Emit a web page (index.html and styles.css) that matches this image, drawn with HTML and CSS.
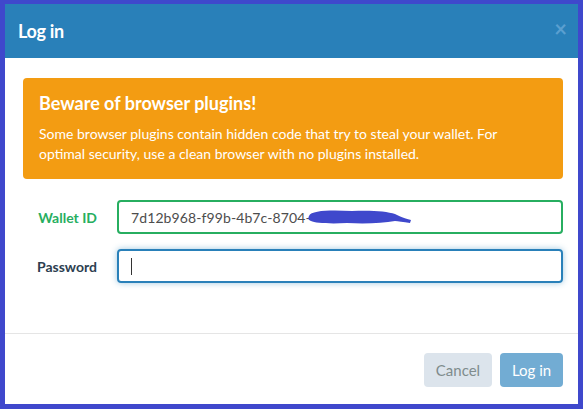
FILE: index.html
```html
<!DOCTYPE html>
<html>
<head>
<meta charset="utf-8">
<link rel="stylesheet" href="styles.css">
</head>
<body>
<div class="modal">
  <div class="modal-header">
    <h1 class="modal-title">Log in</h1>
    <span class="close">&times;</span>
  </div>
  <div class="modal-body">
    <div class="alert">
      <h2 class="alert-title">Beware of browser plugins!</h2>
      <p class="alert-text">Some browser plugins contain hidden code that try to steal your wallet. For optimal security, use a clean browser with no plugins installed.</p>
    </div>
    <div class="form">
      <div class="row">
        <label class="label label-ok">Wallet ID</label>
        <div class="field field-ok">
          <span class="value">7d12b968-f99b-4b7c-8704-</span>
          <svg class="scribble" width="106" height="16" viewBox="0 0 106 16">
            <path d="M2 7 C 4 1, 25 1, 45 2 C 62 1, 80 2, 88 5 C 92 7, 96 9, 104 11 L 103 14 C 96 13, 91 12, 88 12 C 76 14, 60 15, 40 14 C 22 15, 8 14, 4 12 C 1 11, 1 9, 2 7 Z" fill="#3f48cc"/>
          </svg>
        </div>
      </div>
      <div class="row">
        <label class="label">Password</label>
        <div class="field field-focus"><span class="caret"></span></div>
      </div>
    </div>
  </div>
  <div class="modal-footer">
    <button class="btn btn-cancel">Cancel</button>
    <button class="btn btn-primary">Log in</button>
  </div>
</div>
</body>
</html>
```
FILE: styles.css
```css
html, body {
  margin: 0;
  padding: 0;
}
body {
  background: #3f48cc;
  width: 583px;
  height: 409px;
  overflow: hidden;
  font-family: Lato, "Open Sans", sans-serif;
}
.modal {
  margin: 4px 5px 0 5px;
  height: 400px;
  background: #fff;
  display: flex;
  flex-direction: column;
}
.modal-header {
  height: 54px;
  background: #2980b9;
  display: flex;
  align-items: center;
  justify-content: space-between;
  padding: 0 11px 0 13px;
}
.modal-title {
  margin: 0;
  color: #fff;
  font-size: 18px;
  font-weight: 700;
  letter-spacing: -0.3px;
}
.close {
  color: #5a9fd0;
  font-size: 22px;
  font-weight: 700;
  line-height: 1;
  margin-top: -4px;
}
.modal-body {
  padding: 20px 15px 0 18px;
  flex: 1;
}
.alert {
  background: #f39c12;
  border-radius: 4px;
  padding: 14px 40px 15px 16px;
  color: #fff;
}
.alert-title {
  margin: 0 0 10px 0;
  font-size: 18px;
  line-height: 22px;
  font-weight: 700;
}
.alert-text {
  margin: 0;
  font-size: 14px;
  line-height: 20px;
}
.form {
  padding-top: 21px;
  display: flex;
  flex-direction: column;
  gap: 15px;
}
.row {
  display: flex;
  align-items: center;
}
.label {
  width: 74px;
  flex: none;
  text-align: right;
  padding-right: 20px;
  font-size: 14px;
  font-weight: 700;
  color: #2c3e50;
}
.label-ok {
  color: #27ae60;
}
.field {
  position: relative;
  flex: 1;
  height: 34px;
  box-sizing: border-box;
  border: 2px solid #dce4ec;
  border-radius: 4px;
  padding: 0 12px;
  display: flex;
  align-items: center;
  font-size: 14px;
  color: #4d4d4d;
}
.field-ok {
  border-color: #27ae60;
}
.field-focus {
  border-color: #2980b9;
  box-shadow: 0 0 6px rgba(41, 128, 185, 0.45);
}
.value {
  letter-spacing: 0.1px;
}
.scribble {
  position: absolute;
  left: 188px;
  top: 7px;
}
.caret {
  width: 1px;
  height: 17px;
  background: #333;
}
.modal-footer {
  border-top: 1px solid #e5e5e5;
  height: 70px;
  box-sizing: border-box;
  display: flex;
  justify-content: flex-end;
  align-items: flex-start;
  padding: 19px 15px 0 0;
  gap: 8px;
  margin-bottom: 1px;
}
.btn {
  height: 34px;
  border: none;
  border-radius: 4px;
  font-family: Lato, "Open Sans", sans-serif;
  font-size: 15px;
  padding: 0;
  white-space: nowrap;
}
.btn-cancel {
  width: 68px;
  background: #dce4ec;
  color: #7f8c8d;
}
.btn-primary {
  width: 63px;
  background: #72acd3;
  color: #fff;
}
```
